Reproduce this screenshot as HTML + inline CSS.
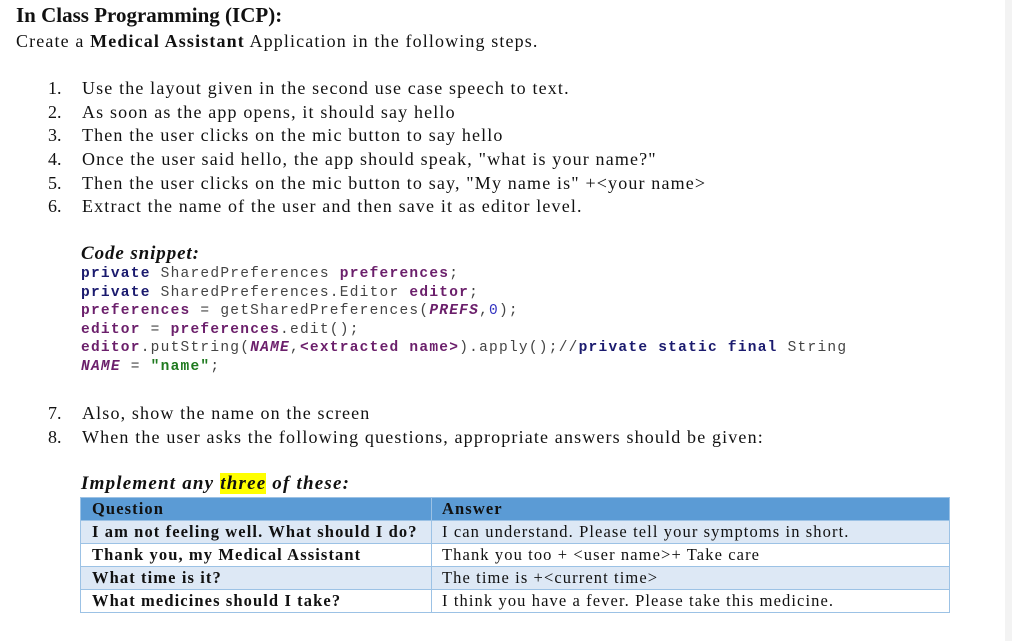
<!DOCTYPE html>
<html><head><meta charset="utf-8"><style>
body{margin:0;width:1012px;height:641px;background:#fff;position:relative;overflow:hidden;font-family:"Liberation Serif",serif;color:#111}
.a{position:absolute;white-space:nowrap}
.strip{position:absolute;left:1005px;top:0;width:7px;height:641px;background:#f3f3f3}
.li{font-size:18px;letter-spacing:1.15px}
.n{position:absolute;left:-34px;letter-spacing:0}
.code{font-family:"Liberation Mono",monospace;font-size:14.5px;color:#444;letter-spacing:1.25px}
.k{color:#1a1a6e;font-weight:bold}
.v{color:#6b1f6b;font-weight:bold}
.c{color:#6b1f6b;font-weight:bold;font-style:italic}
.s{color:#1f7a1f;font-weight:bold}
.num{color:#3030c0}
table{position:absolute;left:80px;top:497px;border-collapse:collapse;font-size:16.5px;width:870px;letter-spacing:1.1px}
td{border:1px solid #9cc2e5;padding:0 10px;height:22px;line-height:22px}
tr.h td{background:#5b9bd5;font-weight:bold}
tr.o td{background:#dde8f5}
td.q{font-weight:bold;width:329px;padding-left:11px}
</style></head><body>
<div class="strip"></div>
<div class="a" style="left:16px;top:3px;font-size:21px;font-weight:bold">In Class Programming (ICP):</div>
<div class="a" style="left:16px;top:31px;font-size:18px;letter-spacing:1.13px">Create a <b>Medical Assistant</b> Application in the following steps.</div>
<div class="a li" style="left:82px;top:78px"><span class="n">1.</span>Use the layout given in the second use case speech to text.</div>
<div class="a li" style="left:82px;top:102px"><span class="n">2.</span>As soon as the app opens, it should say hello</div>
<div class="a li" style="left:82px;top:125px"><span class="n">3.</span>Then the user clicks on the mic button to say hello</div>
<div class="a li" style="left:82px;top:149px"><span class="n">4.</span>Once the user said hello, the app should speak, "what is your name?"</div>
<div class="a li" style="left:82px;top:173px"><span class="n">5.</span>Then the user clicks on the mic button to say, "My name is" +&lt;your name&gt;</div>
<div class="a li" style="left:82px;top:196px"><span class="n">6.</span>Extract the name of the user and then save it as editor level.</div>
<div class="a" style="left:81px;top:243px;font-size:19px;font-weight:bold;font-style:italic;letter-spacing:0.9px">Code snippet:</div>
<div class="a code" style="left:81px;top:265px;line-height:18.6px">
<span class="k">private</span> SharedPreferences <span class="v">preferences</span>;<br>
<span class="k">private</span> SharedPreferences.Editor <span class="v">editor</span>;<br>
<span class="v">preferences</span> = getSharedPreferences(<span class="c">PREFS</span>,<span class="num">0</span>);<br>
<span class="v">editor</span> = <span class="v">preferences</span>.edit();<br>
<span class="v">editor</span>.putString(<span class="c">NAME</span>,<span class="v">&lt;extracted name&gt;</span>).apply();//<span class="k">private static final</span> String<br>
<span class="c">NAME</span> = <span class="s">"name"</span>;
</div>
<div class="a li" style="left:82px;top:403px"><span class="n">7.</span>Also, show the name on the screen</div>
<div class="a li" style="left:82px;top:427px"><span class="n">8.</span>When the user asks the following questions, appropriate answers should be given:</div>
<div class="a" style="left:81px;top:473px;font-size:19px;font-weight:bold;font-style:italic;letter-spacing:1.2px">Implement any <span style="background:#ffff00">three</span> of these:</div>
<table>
<tr class="h"><td class="q">Question</td><td>Answer</td></tr>
<tr class="o"><td class="q">I am not feeling well. What should I do?</td><td>I can understand. Please tell your symptoms in short.</td></tr>
<tr><td class="q">Thank you, my Medical Assistant</td><td>Thank you too + &lt;user name&gt;+ Take care</td></tr>
<tr class="o"><td class="q">What time is it?</td><td>The time is +&lt;current time&gt;</td></tr>
<tr><td class="q">What medicines should I take?</td><td>I think you have a fever. Please take this medicine.</td></tr>
</table>
</body></html>
